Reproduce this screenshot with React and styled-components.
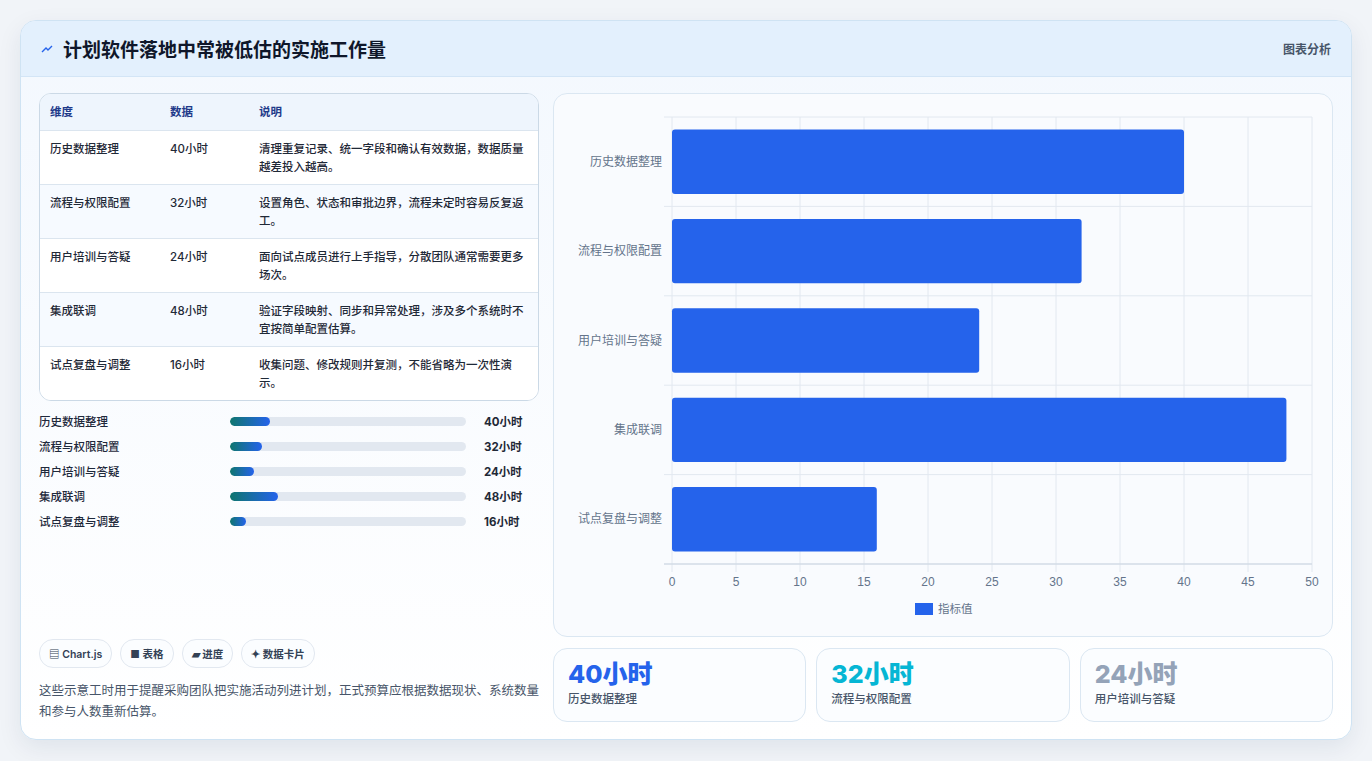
import React from "react";
import styled, { createGlobalStyle } from "styled-components";

const Global = createGlobalStyle`
  body { margin: 0; background: #f1f4f8; font-family: Inter, "Noto Sans CJK SC", sans-serif; color: #1e293b; }
`;

const Page = styled.div`
  padding: 20px;
  height: 761px;
  box-sizing: border-box;
`;

const Card = styled.div`
  height: 720px;
  box-sizing: border-box;
  border: 1px solid #cfe3f3;
  border-radius: 16px;
  background: linear-gradient(180deg, #f3f8fe 0%, #ffffff 100%);
  box-shadow: 0 8px 24px rgba(15, 40, 80, 0.08);
  overflow: hidden;
  display: flex;
  flex-direction: column;
`;

const Header = styled.div`
  height: 55px;
  flex: none;
  display: flex;
  align-items: center;
  justify-content: space-between;
  padding: 0 20px;
  background: #e3f0fd;
  border-bottom: 1px solid #d3e5f6;
`;

const Title = styled.h1`
  margin: 0;
  font-size: 19px;
  font-weight: 700;
  color: #0f172a;
  display: flex;
  align-items: center;
  gap: 10px;
`;

const Tag = styled.span`
  font-size: 12px;
  font-weight: 600;
  color: #475569;
`;

const Body = styled.div`
  flex: 1;
  display: grid;
  grid-template-columns: 500px 780px;
  gap: 14px;
  padding: 16px 18px 18px;
`;

const Left = styled.div`
  display: flex;
  flex-direction: column;
`;

const TableBox = styled.div`
  border: 1px solid #cbd9e6;
  border-radius: 12px;
  overflow: hidden;
  background: #fff;
`;

const Row = styled.div`
  display: grid;
  grid-template-columns: 120px 89px 1fr;
  padding: ${p => (p.head ? "9px 10px" : "9px 10px 8px")};
  min-height: ${p => (p.head ? "15px" : "36px")};
  font-size: 11.5px;
  line-height: 18px;
  font-weight: ${p => (p.head ? 700 : 500)};
  color: ${p => (p.head ? "#1e3a8a" : "#1f2937")};
  background: ${p => (p.head ? "#eef5fd" : p.alt ? "#f6faff" : "#fff")};
  border-top: ${p => (p.head ? "none" : "1px solid #dbe5ef")};
`;

const Progress = styled.div`
  display: flex;
  flex-direction: column;
  gap: 7px;
  margin-top: 11px;
`;

const PRow = styled.div`
  display: grid;
  grid-template-columns: 182px 245px 1fr;
  gap: 0 9px;
  align-items: center;
  font-size: 11.5px;
  font-weight: 500;
  height: 18px;
`;

const Track = styled.div`
  height: 9px;
  border-radius: 5px;
  background: #e2e8f0;
  margin-right: 9px;
  overflow: hidden;
`;

const Fill = styled.div`
  height: 100%;
  border-radius: 5px;
  background: linear-gradient(90deg, #0f766e, #2563eb);
`;

const Val = styled.span`
  font-weight: 700;
  color: #1f2937;
`;

const Chips = styled.div`
  margin-top: auto;
  display: flex;
  gap: 8px;
`;

const Chip = styled.span`
  border: 1px solid #e2e8f0;
  border-radius: 14px;
  padding: 6px 9px;
  font-size: 10.5px;
  font-weight: 600;
  color: #334155;
  background: #fbfdff;
`;

const Note = styled.p`
  margin: 12px 0 0;
  font-size: 12.5px;
  line-height: 21px;
  color: #475569;
`;

const Right = styled.div`
  display: flex;
  flex-direction: column;
  gap: 11px;
`;

const ChartPanel = styled.div`
  height: 544px;
  box-sizing: border-box;
  border: 1px solid #dbe7f2;
  border-radius: 14px;
  background: #f9fbfe;
`;

const Stats = styled.div`
  display: grid;
  grid-template-columns: repeat(3, 1fr);
  gap: 10px;
`;

const Stat = styled.div`
  height: 74px;
  box-sizing: border-box;
  border: 1px solid #dbe7f2;
  border-radius: 14px;
  background: #fbfdff;
  padding: 9px 14px;
`;

const StatNum = styled.div`
  font-size: 25px;
  font-weight: 800;
  line-height: 32px;
  color: ${p => p.c};
`;

const StatLabel = styled.div`
  font-size: 11.5px;
  font-weight: 500;
  color: #475569;
`;

const data = [
  ["历史数据整理", 40, "清理重复记录、统一字段和确认有效数据，数据质量越差投入越高。"],
  ["流程与权限配置", 32, "设置角色、状态和审批边界，流程未定时容易反复返工。"],
  ["用户培训与答疑", 24, "面向试点成员进行上手指导，分散团队通常需要更多场次。"],
  ["集成联调", 48, "验证字段映射、同步和异常处理，涉及多个系统时不宜按简单配置估算。"],
  ["试点复盘与调整", 16, "收集问题、修改规则并复测，不能省略为一次性演示。"],
];

const Chart = () => {
  const L = 118, R = 758, T = 23, B = 470;
  const band = (B - T) / 5;
  const x = v => L + (v / 50) * (R - L);
  return (
    <svg width="778" height="542" style={{ display: "block" }}>
      {Array.from({ length: 11 }, (_, i) => (
        <g key={i}>
          <line x1={x(i * 5)} x2={x(i * 5)} y1={T} y2={B + 8} stroke="#e2e8f0" />
          <text x={x(i * 5)} y={B + 22} fontSize="12" fill="#64748b" textAnchor="middle" fontFamily="Liberation Sans, sans-serif">{i * 5}</text>
        </g>
      ))}
      {Array.from({ length: 6 }, (_, i) => (
        <line key={i} x1={L - 8} x2={R} y1={T + i * band} y2={T + i * band} stroke="#e2e8f0" />
      ))}
      <line x1={L - 8} x2={R} y1={B} y2={B} stroke="#cbd5e1" />
      {data.map(([n, v], i) => (
        <g key={n}>
          <rect x={L} y={T + i * band + 12.5} width={x(v) - L} height={band - 25} rx="3" fill="#2563eb" />
          <text x={L - 10} y={T + i * band + band / 2 + 4} fontSize="12" fill="#64748b" textAnchor="end">{n}</text>
        </g>
      ))}
      <rect x="361" y="509" width="18" height="12" fill="#2563eb" />
      <text x="384" y="519" fontSize="11.5" fill="#64748b">指标值</text>
    </svg>
  );
};

export default function App() {
  return (
    <Page>
      <Global />
      <Card>
        <Header>
          <Title>
            <svg width="12" height="10" viewBox="0 0 12 10">
              <path d="M1 8 L5 4 L7 6 L11 2" fill="none" stroke="#2563eb" strokeWidth="1.4" />
            </svg>
            计划软件落地中常被低估的实施工作量
          </Title>
          <Tag>图表分析</Tag>
        </Header>
        <Body>
          <Left>
            <TableBox>
              <Row head><span>维度</span><span>数据</span><span>说明</span></Row>
              {data.map(([n, v, d], i) => (
                <Row key={n} alt={i % 2 === 1}>
                  <span>{n}</span><span>{v}小时</span><span>{d}</span>
                </Row>
              ))}
            </TableBox>
            <Progress>
              {data.map(([n, v]) => (
                <PRow key={n}>
                  <span>{n}</span>
                  <Track><Fill style={{ width: `${(v / 236) * 100}%` }} /></Track>
                  <Val>{v}小时</Val>
                </PRow>
              ))}
            </Progress>
            <Chips>
              <Chip>▤ Chart.js</Chip>
              <Chip>■ 表格</Chip>
              <Chip>▰ 进度</Chip>
              <Chip>✦ 数据卡片</Chip>
            </Chips>
            <Note>这些示意工时用于提醒采购团队把实施活动列进计划，正式预算应根据数据现状、系统数量和参与人数重新估算。</Note>
          </Left>
          <Right>
            <ChartPanel><Chart /></ChartPanel>
            <Stats>
              <Stat><StatNum c="#2563eb">40小时</StatNum><StatLabel>历史数据整理</StatLabel></Stat>
              <Stat><StatNum c="#06b6d4">32小时</StatNum><StatLabel>流程与权限配置</StatLabel></Stat>
              <Stat><StatNum c="#94a3b8">24小时</StatNum><StatLabel>用户培训与答疑</StatLabel></Stat>
            </Stats>
          </Right>
        </Body>
      </Card>
    </Page>
  );
}
